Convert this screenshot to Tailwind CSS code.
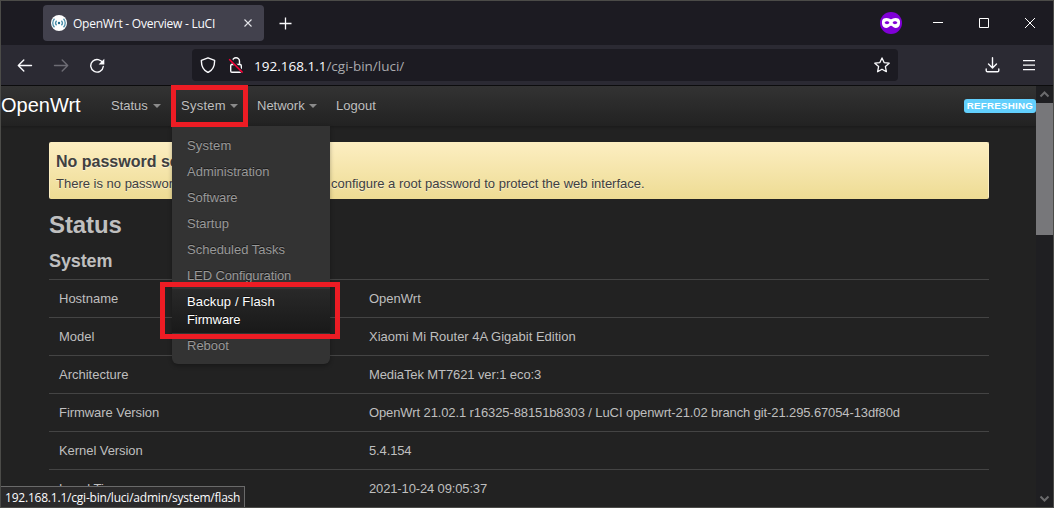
<!DOCTYPE html>
<html lang="en">
<head>
<meta charset="utf-8">
<title>OpenWrt - Overview - LuCI</title>
<script src="https://cdn.jsdelivr.net/npm/@tailwindcss/browser@4"></script>
</head>
<body class="relative flex h-[508px] w-[1054px] flex-col overflow-hidden border border-[#4b4b48] bg-[#222] font-['Liberation_Sans',Arial,sans-serif] text-[13px] leading-[18px] text-[#bfbfbf]">

<!-- Title bar -->
<header class="flex h-[44px] shrink-0 items-start bg-[#1c1b22] font-['Open_Sans','Noto_Sans',sans-serif] text-[#fbfbfe]">
  <div class="mt-1 ml-[42px] flex h-9 w-[221px] items-center rounded bg-[#42414d] pl-2">
    <svg class="size-4 shrink-0" viewBox="0 0 16 16" fill="none" stroke="#4d90aa" stroke-width="1.3"><circle cx="8" cy="8" r="8" fill="#fff" stroke="none"/><circle cx="8" cy="8" r="1.2" fill="#1f6b8a" stroke="none"/><path d="M5.6 5.7a3.3 3.3 0 0 0 0 4.6M10.4 5.7a3.3 3.3 0 0 1 0 4.6M3.5 3.7a6.2 6.2 0 0 0 0 8.6M12.5 3.7a6.2 6.2 0 0 1 0 8.6"/></svg>
    <span class="mt-0.5 ml-1.5 w-[170px] text-[12px] tracking-[-0.23px] whitespace-nowrap">OpenWrt - Overview - LuCI</span>
    <svg class="size-2.5 shrink-0" viewBox="0 0 10 10" stroke="#e4e4e9" stroke-width="1.1"><path d="M1.500 1.500l7 7M8.500 1.500l-7 7"/></svg>
  </div>
  <svg class="mt-4 ml-[15px] size-[13px]" viewBox="0 0 13 13" stroke="#fbfbfe" stroke-width="1.3"><path d="M6.500 .5v12M.5 6.500h12"/></svg>
  <svg class="mt-[11px] ml-auto size-[22px]" viewBox="0 0 22 22"><circle cx="11" cy="11" r="11" fill="#8000d7"/><path fill="#fff" d="M2 9.500C2 7 4 6 6.500 6 8.800 6 9.700 7.200 11 7.200S13.200 6 15.500 6C18 6 20 7 20 9.500v1.700c0 2.800-2 4.800-4.600 4.800-2.200 0-3-2.200-4.400-2.200S8.800 16 6.600 16C4 16 2 14 2 11.200z"/><path fill="#8000d7" d="M4.600 10.800c1.200-2 3.800-1.900 4.800 0-1 1.900-3.600 2-4.800 0zM17.400 10.800c-1.200-2-3.800-1.900-4.800 0 1 1.900 3.600 2 4.800 0z"/></svg>
  <svg class="mt-[17px] ml-[31px] h-[10px] w-[10px]" viewBox="0 0 10 10"><path d="M0 4h10v1H0z" fill="#fff"/></svg>
  <svg class="mt-[17px] ml-[36px] h-[10px] w-[10px]" viewBox="0 0 10 10" fill="none" stroke="#fff"><path d="M.5.5h9v9h-9z"/></svg>
  <svg class="mt-[17px] mr-[18px] ml-[36px] h-[10px] w-[10px]" viewBox="0 0 10 10" stroke="#fff"><path d="M0 0l10 10M10 0L0 10"/></svg>
</header>

<!-- Navigation toolbar -->
<div class="flex h-10 shrink-0 items-center bg-[#2b2a33] pl-4">
  <svg class="size-4" viewBox="0 0 16 16" fill="none" stroke="#fbfbfe" stroke-width="1.4" stroke-linecap="round" stroke-linejoin="round"><path d="M14.500 8.500h-13M6.800 3L1.300 8.500 6.800 14"/></svg>
  <svg class="ml-5 size-4" viewBox="0 0 16 16" fill="none" stroke="#6d6c74" stroke-width="1.400" stroke-linecap="round" stroke-linejoin="round"><path d="M1.500 8.500h13M9.200 3l5.500 5.500L9.200 14"/></svg>
  <svg class="ml-5 size-4" viewBox="0 0 16 16" fill="none" stroke="#fbfbfe" stroke-width="1.400" stroke-linecap="round"><path d="M13.800 6.200A6.300 6.300 0 1 0 14.300 9.500"/><path fill="#fbfbfe" stroke="none" d="M15.300 1.800v5.700H9.600z"/></svg>
  <div class="ml-[87px] flex h-8 w-[706px] items-center rounded bg-[#1c1b22] pl-2 text-[#fbfbfe]">
    <svg class="size-4" viewBox="0 0 16 16" fill="none" stroke="#fbfbfe" stroke-width="1.400" stroke-linejoin="round"><path d="M8 .8l6.600 2.500c.2 5.700-1.600 10-6.600 12.200C3 13.300 1.200 9 1.400 3.300z"/></svg>
    <svg class="ml-3 size-4" viewBox="0 0 16 16" fill="none" stroke="#fbfbfe" stroke-width="1.400"><path d="M4.500 7.500V4.300a3.500 3.500 0 0 1 7 0v3.200"/><rect x="2.700" y="7.500" width="10.600" height="7.700" rx="1.300"/><path d="M1.800 1.800l13 13.400" stroke="#1c1b22" stroke-width="3"/><path d="M1.200 2.200l13.400 13.300" stroke="#ff0039" stroke-width="1.500"/></svg>
    <div class="mt-px ml-[10px] font-['Open_Sans','Noto_Sans',sans-serif] text-[13.500px] leading-5 whitespace-nowrap">192.168.1.1<span class="text-[#a9a9ad]">/cgi-bin/luci/</span></div>
    <svg class="mr-2 ml-auto size-4" viewBox="0 0 16 16" fill="none" stroke="#fbfbfe" stroke-width="1.300" stroke-linejoin="round"><path d="M8 .9l2.100 4.700 5.100.6-3.800 3.400 1 5.100L8 12.200l-4.400 2.500 1-5.100L.8 6.200l5.100-.6z"/></svg>
  </div>
  <svg class="ml-[87px] size-4" viewBox="0 0 16 16" fill="none" stroke="#fbfbfe" stroke-width="1.400" stroke-linecap="round" stroke-linejoin="round"><path d="M7.500.8v10M3.500 7l4 4 4-4M1.200 12v1.500c0 .8.500 1.300 1.300 1.300h10c.8 0 1.300-.5 1.300-1.300V12"/></svg>
  <svg class="ml-5 size-4" viewBox="0 0 16 16" fill="#fbfbfe"><path d="M2 3h12v1.200H2zM2 7.500h12v1.200H2zM2 12h12v1.200H2z"/></svg>
</div>

<div class="flex min-h-0 grow border-t border-[#0c0c0d]">
  <!-- Page -->
  <main class="min-w-0 grow overflow-hidden">
    <nav class="flex h-10 items-center bg-linear-to-b from-[#333] to-[#222] shadow-[0_1px_3px_rgba(0,0,0,0.25)] [text-shadow:0_-1px_0_rgba(0,0,0,0.25)]">
      <a class="-mt-[3px] w-[110px] text-[20px] leading-5 text-white">OpenWrt</a>
      <a class="flex w-[70px] items-center gap-[5px]">Status<i class="border-x-4 border-t-4 border-x-transparent border-t-[#8b8b8b]"></i></a>
      <a class="flex w-[76px] items-center gap-1 tracking-[0.25px]">System<i class="border-x-4 border-t-4 border-x-transparent border-t-[#8b8b8b]"></i></a>
      <a class="flex w-[79px] items-center gap-1">Network<i class="border-x-4 border-t-4 border-x-transparent border-t-[#8b8b8b]"></i></a>
      <a>Logout</a>
      <span class="ml-auto h-[14px] w-[72px] rounded-[3px] bg-[#62cffc] text-center text-[9.750px] leading-[14px] font-bold tracking-[0.25px] text-white [text-shadow:none]">REFRESHING</span>
    </nav>
    <div class="ml-12 w-[940px]">
      <section class="mt-4 h-[57px] rounded-xs border border-[#fceec1] border-b-[#eedc94] bg-linear-to-b from-[#fceec1] to-[#eedc94] pt-[10px] pl-[6px] text-[#404040] [text-shadow:0_1px_0_rgba(255,255,255,0.5)]">
        <h4 class="text-[16px] font-bold">No password set!</h4>
        <p class="mt-1 flex whitespace-nowrap"><span class="w-[275px]">There is no password set on this router.</span><span>configure a root password to protect the web interface.</span></p>
      </section>
      <h2 class="mt-2 text-[24px] leading-9 font-bold tracking-[-0.1px]">Status</h2>
      <h3 class="text-[18px] leading-9 font-bold tracking-[-0.1px]">System</h3>
      <dl class="whitespace-nowrap">
        <div class="flex h-[38px] items-center border-t border-[#444] pl-[10px]"><dt class="w-[310px]">Hostname</dt><dd>OpenWrt</dd></div>
        <div class="flex h-[38px] items-center border-t border-[#444] pl-[10px]"><dt class="w-[310px]">Model</dt><dd>Xiaomi Mi Router 4A Gigabit Edition</dd></div>
        <div class="flex h-[38px] items-center border-t border-[#444] pl-[10px]"><dt class="w-[310px]">Architecture</dt><dd class="tracking-[-0.1px]">MediaTek MT7621 ver:1 eco:3</dd></div>
        <div class="flex h-[38px] items-center border-t border-[#444] pl-[10px]"><dt class="w-[310px] tracking-[-0.06px]">Firmware Version</dt><dd class="tracking-[-0.11px]">OpenWrt 21.02.1 r16325-88151b8303 / LuCI openwrt-21.02 branch git-21.295.67054-13df80d</dd></div>
        <div class="flex h-[38px] items-center border-t border-[#444] pl-[10px]"><dt class="w-[310px] tracking-[-0.06px]">Kernel Version</dt><dd class="tracking-[-0.13px]">5.4.154</dd></div>
        <div class="flex h-[38px] items-center border-t border-[#444] pl-[10px]"><dt class="w-[310px]">Local Time</dt><dd class="tracking-[-0.14px]">2021-10-24 09:05:37</dd></div>
      </dl>
    </div>
  </main>
  <!-- Scrollbar -->
  <div class="flex w-[17px] shrink-0 flex-col items-center bg-[#1f1f22]">
    <svg class="h-[17px] w-[17px] shrink-0" viewBox="0 0 17 17" fill="none" stroke="#6b6b6d" stroke-width="2"><path d="M4.500 10.500l4-4 4 4"/></svg>
    <div class="h-[132px] w-full bg-[#77777a]"></div>
    <svg class="mt-auto h-[17px] w-[17px] shrink-0" viewBox="0 0 17 17" fill="none" stroke="#6b6b6d" stroke-width="2"><path d="M4.500 6.500l4 4 4-4"/></svg>
  </div>
</div>

<!-- System menu -->
<ul class="absolute top-[125px] left-[171px] w-[158px] rounded-b-md bg-[#333] pt-[7px] pb-[5px] text-[#999] shadow-[0_2px_4px_rgba(0,0,0,0.3)] [text-shadow:0_-1px_0_rgba(0,0,0,0.5)]">
  <li class="px-[15px] py-1 tracking-[0.2px]">System</li>
  <li class="px-[15px] py-1">Administration</li>
  <li class="px-[15px] py-1 tracking-[-0.1px]">Software</li>
  <li class="px-[15px] py-1">Startup</li>
  <li class="px-[15px] py-1">Scheduled Tasks</li>
  <li class="px-[15px] py-1 tracking-[-0.12px]">LED Configuration</li>
  <li class="bg-linear-to-b from-[#292929] to-[#191919] px-[15px] py-1 text-white"><span class="tracking-[0.13px]">Backup / Flash</span><br><span class="tracking-[-0.1px]">Firmware</span></li>
  <li class="px-[15px] py-1">Reboot</li>
</ul>

<!-- Highlights -->
<div class="absolute top-[84px] left-[170px] h-[42px] w-[77px] border-[5px] border-[#ed1c24]"></div>
<div class="absolute top-[281px] left-[159px] h-[57px] w-[180px] border-[5px] border-[#ed1c24]"></div>

<!-- Link target -->
<div class="absolute bottom-0 left-0 h-[21px] w-[244px] border-t border-r border-[#6a6a6a] bg-[#2b2a2b] pl-1 font-['Open_Sans','Noto_Sans',sans-serif] text-[12px] leading-[22px] tracking-[-0.21px] whitespace-nowrap text-[#fbfbfe]">192.168.1.1/cgi-bin/luci/admin/system/flash</div>
</body>
</html>
